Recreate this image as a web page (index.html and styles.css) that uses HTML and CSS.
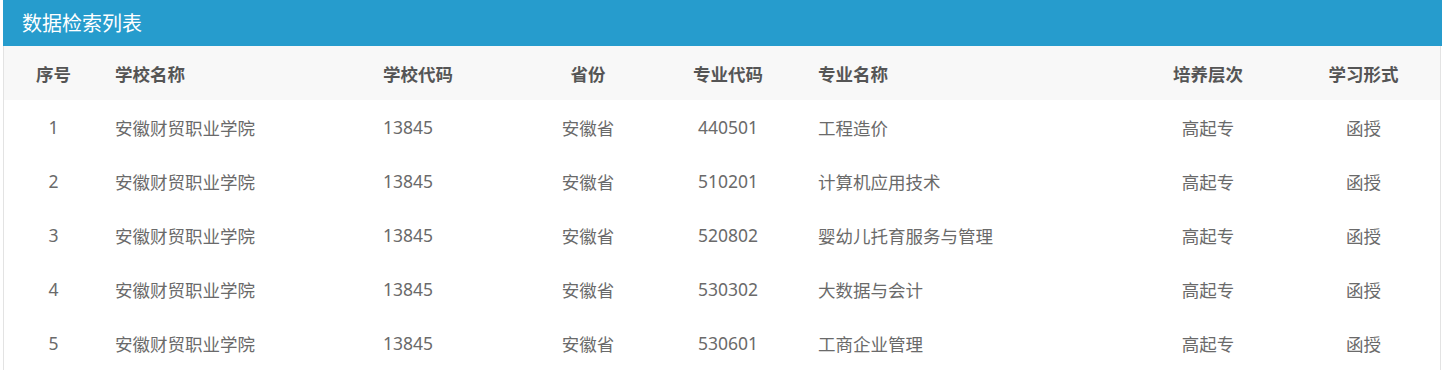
FILE: index.html
```html
<!DOCTYPE html>
<html lang="zh-CN">
<head>
<meta charset="utf-8">
<title>数据检索列表</title>
<link rel="stylesheet" href="styles.css">
</head>
<body>
<div class="panel">
  <div class="panel-title">数据检索列表</div>
  <div class="panel-body">
    <table class="data-table">
      <colgroup>
        <col class="c1"><col class="c2"><col class="c3"><col class="c4">
        <col class="c5"><col class="c6"><col class="c7"><col class="c8">
      </colgroup>
      <thead>
        <tr>
          <th class="center">序号</th>
          <th class="left">学校名称</th>
          <th class="left">学校代码</th>
          <th class="center">省份</th>
          <th class="center">专业代码</th>
          <th class="left">专业名称</th>
          <th class="center">培养层次</th>
          <th class="center">学习形式</th>
        </tr>
      </thead>
      <tbody>
        <tr>
          <td class="center">1</td><td class="left">安徽财贸职业学院</td><td class="left">13845</td><td class="center">安徽省</td>
          <td class="center">440501</td><td class="left">工程造价</td><td class="center">高起专</td><td class="center">函授</td>
        </tr>
        <tr>
          <td class="center">2</td><td class="left">安徽财贸职业学院</td><td class="left">13845</td><td class="center">安徽省</td>
          <td class="center">510201</td><td class="left">计算机应用技术</td><td class="center">高起专</td><td class="center">函授</td>
        </tr>
        <tr>
          <td class="center">3</td><td class="left">安徽财贸职业学院</td><td class="left">13845</td><td class="center">安徽省</td>
          <td class="center">520802</td><td class="left">婴幼儿托育服务与管理</td><td class="center">高起专</td><td class="center">函授</td>
        </tr>
        <tr>
          <td class="center">4</td><td class="left">安徽财贸职业学院</td><td class="left">13845</td><td class="center">安徽省</td>
          <td class="center">530302</td><td class="left">大数据与会计</td><td class="center">高起专</td><td class="center">函授</td>
        </tr>
        <tr>
          <td class="center">5</td><td class="left">安徽财贸职业学院</td><td class="left">13845</td><td class="center">安徽省</td>
          <td class="center">530601</td><td class="left">工商企业管理</td><td class="center">高起专</td><td class="center">函授</td>
        </tr>
      </tbody>
    </table>
  </div>
</div>
</body>
</html>
```
FILE: styles.css
```css
html, body {
  margin: 0;
  padding: 0;
  background: #ffffff;
}

body {
  font-family: "Noto Sans", "Noto Sans CJK SC", sans-serif;
}

.panel {
  margin-left: 3px;
}

.panel-title {
  height: 46px;
  line-height: 46px;
  background: #269ccd;
  color: #ffffff;
  font-size: 20px;
  padding-left: 19px;
  font-family: "Noto Sans CJK SC", sans-serif;
}

.panel-body {
  margin-right: 1px;
  border-left: 1px solid #e3e3e3;
  border-right: 1px solid #e3e3e3;
}

.data-table {
  width: 100%;
  border-collapse: collapse;
  table-layout: fixed;
  font-size: 17.5px;
  color: #6a6a6a;
}

.c1 { width: 99px; }
.c2 { width: 268px; }
.c3 { width: 155px; }
.c4 { width: 124px; }
.c5 { width: 156px; }
.c6 { width: 323px; }
.c7 { width: 158px; }
.c8 { width: auto; }

.data-table th,
.data-table td {
  height: 54px;
  padding: 0 12px;
  vertical-align: middle;
  white-space: nowrap;
}

.data-table thead th {
  background: #f8f8f8;
  color: #555555;
  font-weight: bold;
  font-family: "Noto Sans CJK SC", sans-serif;
}

.left { text-align: left; }
.center { text-align: center; }
```
